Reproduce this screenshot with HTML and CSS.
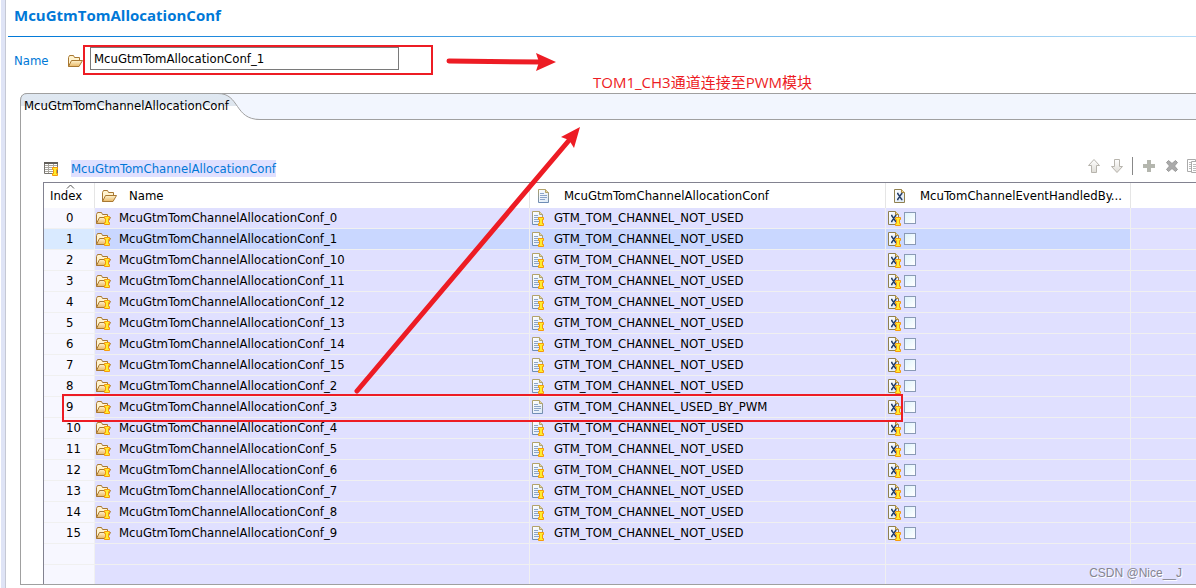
FILE: index.html
```html
<!DOCTYPE html>
<html lang="en">
<head>
<meta charset="utf-8">
<title>McuGtmTomAllocationConf</title>
<link rel="stylesheet" href="styles.css">
</head>
<body>
<svg class="sprite" aria-hidden="true">
  <defs>
    <linearGradient id="gold" x1="0" y1="0" x2="0" y2="1"><stop offset="0" stop-color="#fff3cf"/><stop offset="1" stop-color="#e8b765"/></linearGradient>
    <linearGradient id="paper" x1="0" y1="0" x2="1" y2="1"><stop offset="0" stop-color="#ffffff"/><stop offset="1" stop-color="#dbe8f6"/></linearGradient>
    <linearGradient id="rim" x1="0" y1="0" x2="0" y2="1"><stop offset="0" stop-color="#b3a36a"/><stop offset="1" stop-color="#6f8db5"/></linearGradient>
    <linearGradient id="arrow" x1="0" y1="0" x2="0" y2="1"><stop offset="0" stop-color="#ffffff"/><stop offset="1" stop-color="#dedcd6"/></linearGradient>
    <symbol id="pin" viewBox="0 0 6 9"><path d="M.5.5h5v2h-1v4h1v2h-5v-2h1v-4h-1z" fill="#ffee2e" stroke="#f59a0c"/></symbol>
    <symbol id="folder" viewBox="0 0 16 16"><path d="M1.500 13.500V4.500l1-2h4l1 2h5v3" fill="#fff3cf" stroke="#a87832"/><path d="M1.500 13.500l3-6h11l-3.500 6z" fill="url(#gold)" stroke="#a87832"/></symbol>
    <symbol id="page" viewBox="0 0 16 16"><path d="M2.500 1.500h7l3 3v10h-10z" fill="url(#paper)" stroke="url(#rim)"/><path d="M9.500 1.500v3h3" fill="#e5d6a0" stroke="#b3a36a"/><path d="M4 5.500h4M4 7.500h7M4 9.500h7M4 11.500h5" stroke="#8ba4c9"/></symbol>
    <symbol id="xpage" viewBox="0 0 16 16"><path d="M2.500 1.500h7l3 3v10h-10z" fill="url(#paper)" stroke="#8f8050"/><path d="M9.500 1.500v3h3" fill="#ecd595" stroke="#b08a3a"/><path d="M5 5.500h1.500M9 5.500h1.500M5 11.500h1.500M9 11.500h1.500M5.700 5.500l4 6M9.700 5.500l-4 6" fill="none" stroke="#263f68" stroke-width="1.400"/></symbol>
    <symbol id="folder-pin" viewBox="0 0 16 16"><use href="#folder" width="16" height="16"/><use href="#pin" x="9" y="6" width="6" height="9"/></symbol>
    <symbol id="page-pin" viewBox="0 0 16 16"><use href="#page" width="16" height="16"/><use href="#pin" x="8" y="7" width="6" height="9"/></symbol>
    <symbol id="xpage-pin" viewBox="0 0 16 16"><use href="#xpage" width="16" height="16"/><use href="#pin" x="9" y="7" width="6" height="9"/></symbol>
  </defs>
</svg>
<div class="editor">
  <header class="title-bar"><h1>McuGtmTomAllocationConf</h1></header>
  <div class="name-row">
    <label for="conf-name">Name</label>
    <svg class="icon"><use href="#folder"/></svg>
    <input id="conf-name" class="name-input" type="text" value="McuGtmTomAllocationConf_1" spellcheck="false">
  </div>
  <section class="panel">
    <div class="tab-bar">
      <svg class="tab-shape" viewBox="0 0 240 27" aria-hidden="true">
        <defs><linearGradient id="tabfill" x1="0" y1="0" x2="0" y2="1"><stop offset="0" stop-color="#dfe8f2"/><stop offset=".48" stop-color="#dfe6ee"/><stop offset=".48" stop-color="#fff"/><stop offset="1" stop-color="#fff"/></linearGradient></defs>
        <path d="M.5 27V7Q1 .5 7 .5H198C220 .5 214 26.500 240 26.500V27z" fill="url(#tabfill)"/>
        <path d="M.5 27V7Q1 .5 7 .5H198C220 .5 214 26.500 240 26.500" fill="none" stroke="#a0a0a0"/>
      </svg>
      <button class="tab" type="button">McuGtmTomChannelAllocationConf</button>
    </div>
    <div class="panel-body">
      <div class="list-head">
        <svg class="icon" viewBox="0 0 16 16"><path d="M.5 2.500h13v11H.5z" fill="#fff" stroke="#77746e"/><path d="M0 3h14" stroke="#625f5a" stroke-width="2"/><path d="M1 5.500h12M1 7.500h12M1 9.500h12M1 11.500h12M4.500 4v9M9.500 4v9" stroke="#aaa79f"/><use href="#pin" x="8" y="7" width="6" height="9"/></svg>
        <h2>McuGtmTomChannelAllocationConf</h2>
        <div class="toolbar">
          <button type="button" aria-label="Move up"><svg class="icon" viewBox="0 0 16 16"><path d="M8 1.500l5.500 6H10.500v7h-5v-7H2.500z" fill="url(#arrow)" stroke="#b7b4ad"/></svg></button>
          <button type="button" aria-label="Move down"><svg class="icon" viewBox="0 0 16 16"><path d="M8 14.500l-5.500-6h3v-7h5v7h3z" fill="url(#arrow)" stroke="#b7b4ad"/></svg></button>
          <span class="divider"></span>
          <button type="button" aria-label="Add"><svg class="icon" viewBox="0 0 16 16"><path d="M6 2h4v4h4v4h-4v4H6v-4H2V6h4z" fill="#b4b6ae"/></svg></button>
          <button type="button" aria-label="Delete"><svg class="icon" viewBox="0 0 16 16"><path d="M4.500 2.500L8 5.500l3.500-3L13.500 4.500 10.500 8l3 3.500-2 2L8 10.500l-3.500 3-2-2 3-3.500-3-3.500z" fill="#aaa" stroke="#9a9a9a"/></svg></button>
          <button class="clipped" type="button" aria-label="Duplicate"><svg class="icon" viewBox="0 0 16 16"><path d="M.5 1.500h8v12h-8z" fill="#fff" stroke="#aaa"/><path d="M4.500 3.500h10v11h-10z" fill="#fff" stroke="#aaa"/><path d="M2 4.500h2M2 6.500h2M2 8.500h2M2 10.500h2M6 6.500h7M6 8.500h7M6 10.500h7M6 12.500h7" stroke="#bbb"/></svg></button>
        </div>
      </div>
      <table class="grid">
        <colgroup><col class="c-index"><col class="c-name"><col class="c-conf"><col class="c-event"><col></colgroup>
        <thead><tr>
          <th><svg class="sort" viewBox="0 0 9 5" aria-hidden="true"><path d="M1 4.500l3.500-3.500L8 4.500" fill="none" stroke="#555"/></svg><div class="head">Index</div></th>
          <th><div class="head"><svg class="icon"><use href="#folder"/></svg>Name</div></th>
          <th><div class="head"><svg class="icon"><use href="#page"/></svg>McuGtmTomChannelAllocationConf</div></th>
          <th><div class="head"><svg class="icon"><use href="#xpage"/></svg>McuTomChannelEventHandledBy...</div></th>
          <th></th>
        </tr></thead>
        <tbody>
          <tr><td>0</td><td><div class="cell"><svg class="icon"><use href="#folder-pin"/></svg>McuGtmTomChannelAllocationConf_0</div></td><td><div class="cell"><svg class="icon"><use href="#page-pin"/></svg>GTM_TOM_CHANNEL_NOT_USED</div></td><td><div class="check"><svg class="icon"><use href="#xpage-pin"/></svg><input type="checkbox" aria-label="Event handled, row 0"></div></td><td></td></tr>
          <tr class="selected"><td>1</td><td><div class="cell"><svg class="icon"><use href="#folder-pin"/></svg>McuGtmTomChannelAllocationConf_1</div></td><td><div class="cell"><svg class="icon"><use href="#page-pin"/></svg>GTM_TOM_CHANNEL_NOT_USED</div></td><td><div class="check"><svg class="icon"><use href="#xpage-pin"/></svg><input type="checkbox" aria-label="Event handled, row 1"></div></td><td></td></tr>
          <tr><td>2</td><td><div class="cell"><svg class="icon"><use href="#folder-pin"/></svg>McuGtmTomChannelAllocationConf_10</div></td><td><div class="cell"><svg class="icon"><use href="#page-pin"/></svg>GTM_TOM_CHANNEL_NOT_USED</div></td><td><div class="check"><svg class="icon"><use href="#xpage-pin"/></svg><input type="checkbox" aria-label="Event handled, row 2"></div></td><td></td></tr>
          <tr><td>3</td><td><div class="cell"><svg class="icon"><use href="#folder-pin"/></svg>McuGtmTomChannelAllocationConf_11</div></td><td><div class="cell"><svg class="icon"><use href="#page-pin"/></svg>GTM_TOM_CHANNEL_NOT_USED</div></td><td><div class="check"><svg class="icon"><use href="#xpage-pin"/></svg><input type="checkbox" aria-label="Event handled, row 3"></div></td><td></td></tr>
          <tr><td>4</td><td><div class="cell"><svg class="icon"><use href="#folder-pin"/></svg>McuGtmTomChannelAllocationConf_12</div></td><td><div class="cell"><svg class="icon"><use href="#page-pin"/></svg>GTM_TOM_CHANNEL_NOT_USED</div></td><td><div class="check"><svg class="icon"><use href="#xpage-pin"/></svg><input type="checkbox" aria-label="Event handled, row 4"></div></td><td></td></tr>
          <tr><td>5</td><td><div class="cell"><svg class="icon"><use href="#folder-pin"/></svg>McuGtmTomChannelAllocationConf_13</div></td><td><div class="cell"><svg class="icon"><use href="#page-pin"/></svg>GTM_TOM_CHANNEL_NOT_USED</div></td><td><div class="check"><svg class="icon"><use href="#xpage-pin"/></svg><input type="checkbox" aria-label="Event handled, row 5"></div></td><td></td></tr>
          <tr><td>6</td><td><div class="cell"><svg class="icon"><use href="#folder-pin"/></svg>McuGtmTomChannelAllocationConf_14</div></td><td><div class="cell"><svg class="icon"><use href="#page-pin"/></svg>GTM_TOM_CHANNEL_NOT_USED</div></td><td><div class="check"><svg class="icon"><use href="#xpage-pin"/></svg><input type="checkbox" aria-label="Event handled, row 6"></div></td><td></td></tr>
          <tr><td>7</td><td><div class="cell"><svg class="icon"><use href="#folder-pin"/></svg>McuGtmTomChannelAllocationConf_15</div></td><td><div class="cell"><svg class="icon"><use href="#page-pin"/></svg>GTM_TOM_CHANNEL_NOT_USED</div></td><td><div class="check"><svg class="icon"><use href="#xpage-pin"/></svg><input type="checkbox" aria-label="Event handled, row 7"></div></td><td></td></tr>
          <tr><td>8</td><td><div class="cell"><svg class="icon"><use href="#folder-pin"/></svg>McuGtmTomChannelAllocationConf_2</div></td><td><div class="cell"><svg class="icon"><use href="#page-pin"/></svg>GTM_TOM_CHANNEL_NOT_USED</div></td><td><div class="check"><svg class="icon"><use href="#xpage-pin"/></svg><input type="checkbox" aria-label="Event handled, row 8"></div></td><td></td></tr>
          <tr><td>9</td><td><div class="cell"><svg class="icon"><use href="#folder-pin"/></svg>McuGtmTomChannelAllocationConf_3</div></td><td><div class="cell"><svg class="icon"><use href="#page"/></svg>GTM_TOM_CHANNEL_USED_BY_PWM</div></td><td><div class="check"><svg class="icon"><use href="#xpage-pin"/></svg><input type="checkbox" aria-label="Event handled, row 9"></div></td><td></td></tr>
          <tr><td>10</td><td><div class="cell"><svg class="icon"><use href="#folder-pin"/></svg>McuGtmTomChannelAllocationConf_4</div></td><td><div class="cell"><svg class="icon"><use href="#page-pin"/></svg>GTM_TOM_CHANNEL_NOT_USED</div></td><td><div class="check"><svg class="icon"><use href="#xpage-pin"/></svg><input type="checkbox" aria-label="Event handled, row 10"></div></td><td></td></tr>
          <tr><td>11</td><td><div class="cell"><svg class="icon"><use href="#folder-pin"/></svg>McuGtmTomChannelAllocationConf_5</div></td><td><div class="cell"><svg class="icon"><use href="#page-pin"/></svg>GTM_TOM_CHANNEL_NOT_USED</div></td><td><div class="check"><svg class="icon"><use href="#xpage-pin"/></svg><input type="checkbox" aria-label="Event handled, row 11"></div></td><td></td></tr>
          <tr><td>12</td><td><div class="cell"><svg class="icon"><use href="#folder-pin"/></svg>McuGtmTomChannelAllocationConf_6</div></td><td><div class="cell"><svg class="icon"><use href="#page-pin"/></svg>GTM_TOM_CHANNEL_NOT_USED</div></td><td><div class="check"><svg class="icon"><use href="#xpage-pin"/></svg><input type="checkbox" aria-label="Event handled, row 12"></div></td><td></td></tr>
          <tr><td>13</td><td><div class="cell"><svg class="icon"><use href="#folder-pin"/></svg>McuGtmTomChannelAllocationConf_7</div></td><td><div class="cell"><svg class="icon"><use href="#page-pin"/></svg>GTM_TOM_CHANNEL_NOT_USED</div></td><td><div class="check"><svg class="icon"><use href="#xpage-pin"/></svg><input type="checkbox" aria-label="Event handled, row 13"></div></td><td></td></tr>
          <tr><td>14</td><td><div class="cell"><svg class="icon"><use href="#folder-pin"/></svg>McuGtmTomChannelAllocationConf_8</div></td><td><div class="cell"><svg class="icon"><use href="#page-pin"/></svg>GTM_TOM_CHANNEL_NOT_USED</div></td><td><div class="check"><svg class="icon"><use href="#xpage-pin"/></svg><input type="checkbox" aria-label="Event handled, row 14"></div></td><td></td></tr>
          <tr><td>15</td><td><div class="cell"><svg class="icon"><use href="#folder-pin"/></svg>McuGtmTomChannelAllocationConf_9</div></td><td><div class="cell"><svg class="icon"><use href="#page-pin"/></svg>GTM_TOM_CHANNEL_NOT_USED</div></td><td><div class="check"><svg class="icon"><use href="#xpage-pin"/></svg><input type="checkbox" aria-label="Event handled, row 15"></div></td><td></td></tr>
          <tr><td></td><td></td><td></td><td></td><td></td></tr>
          <tr class="last"><td></td><td></td><td></td><td></td><td></td></tr>
        </tbody>
      </table>
    </div>
  </section>
</div>
<svg class="marks" width="920" height="430" aria-hidden="true">
  <g fill="none" stroke="#ed1c24" stroke-width="2"><path d="M84 46h348v28H84z"/><path d="M63 395h839v26H63z"/></g>
  <g stroke="#ed1c24" stroke-linecap="round" stroke-width="5"><path d="M449 61l92 1"/><path d="M357 391L571 138"/></g>
  <g fill="#ed1c24"><path d="M556 62l-20-9 3 9-3 9z"/><path d="M580 127l-19 10 8 3 5 8z"/></g>
</svg>
<p class="note">TOM1_CH3通道连接至PWM模块</p>
<p class="watermark">CSDN @Nice__J</p>
</body>
</html>
```
FILE: styles.css
```css
* { box-sizing: border-box; }
body {
  position: relative;
  margin: 0;
  padding-left: 1px;
  min-height: 100vh;
  background: #fff;
  color: #000;
  font: 13px/20px "DejaVu Sans Condensed", "Noto Sans CJK SC", sans-serif;
}
h1, h2, p { margin: 0; }
button { border: 0; padding: 0; background: none; font: inherit; color: inherit; }
.sprite { position: absolute; width: 0; height: 0; }
.icon { display: block; flex: none; width: 16px; height: 16px; }
.editor {
  min-height: 100vh;
  border-left: 4px solid #dfe4f6;
  box-shadow: inset 1px 0 #c5c8d4;
  overflow: hidden;
}
.title-bar {
  height: 37px;
  margin-left: 3px;
  padding: 5px 6px;
  border-bottom: 1px solid;
  border-image: linear-gradient(90deg, #0078d7, #b5dcf7) 1;
}
h1 { font: 700 15px/20px "Open Sans", sans-serif; color: #0078d7; }
.name-row { display: flex; align-items: center; height: 46px; margin-top: 1px; padding: 0 9px; }
.name-row label { width: 53px; color: #0078d7; }
.name-input {
  width: 309px;
  height: 23px;
  margin: 0 0 5px 7px;
  padding: 0 3px;
  border: 1px solid #7a7a7a;
  background: #fff;
  font: inherit;
  color: inherit;
}
.panel { margin: 9px 0 3px 15px; border-bottom: 1px solid #a0a0a0; }
.tab-bar {
  position: relative;
  height: 27px;
  border: solid #a0a0a0;
  border-width: 1px 0;
  border-radius: 8px 0 0 0;
  background: #f2f6fe;
}
.tab-shape { position: absolute; left: 0; top: -1px; width: 240px; height: 27px; }
.tab { position: relative; display: block; padding: 2px 4px; }
.panel-body { padding: 35px 0 0 22px; border-left: 1px solid #a0a0a0; }
.list-head { display: flex; align-items: center; height: 27px; padding-bottom: 2px; }
.list-head .icon { margin-left: 1px; }
.list-head h2 { margin: 1px 0 0 11px; background: #e0e0ff; color: #0078d7; font-size: 13px; line-height: 17px; font-weight: 400; }
.toolbar { display: flex; align-items: center; gap: 7px; height: 18px; margin: 0 0 3px auto; }
.toolbar .icon { margin: 0; }
.toolbar .divider { width: 1px; height: 18px; background: #888; margin-right: 1px; }
.toolbar .clipped { width: 9px; overflow: hidden; }
.grid {
  width: 100%;
  table-layout: fixed;
  border-collapse: separate;
  border-spacing: 0;
  border: solid #828290;
  border-width: 1px 0 0 1px;
}
.c-index { width: 51px; }
.c-name { width: 435px; }
.c-conf { width: 356px; }
.c-event { width: 245px; }
th, td { padding: 0; text-align: left; font-weight: 400; white-space: nowrap; overflow: hidden; }
th { position: relative; height: 25px; border-right: 1px solid #e5e5e5; }
th:last-child, td:last-child { border-right: 0; }
.sort { position: absolute; left: 22px; top: 1px; width: 9px; height: 5px; }
.head { display: flex; align-items: center; gap: 12px; padding-left: 6px; }
td {
  height: 21px;
  line-height: 20px;
  background: #e0e0ff;
  border: solid #f0f0f0;
  border-width: 0 1px 1px 0;
}
td:first-child { padding-left: 22px; background: #f7f7ff; }
.cell { display: flex; align-items: center; gap: 8px; height: 20px; }
.check { display: flex; align-items: center; gap: 2px; height: 20px; }
.check input {
  appearance: none;
  width: 12px;
  height: 12px;
  margin: 0;
  border: 1px solid #8a9ab5;
  background: linear-gradient(135deg, #dff3fb, #fff);
}
.selected td { background: #c9d7ff; }
.selected td:first-child { background: #d9eaff; }
.selected td:last-child { background: #e0e0ff; }
.last td { height: 19px; border-bottom: 0; }
.marks { position: absolute; left: 0; top: 0; }
.note {
  position: absolute;
  left: 593px;
  top: 72px;
  font: 15px/20px "Open Sans", "Noto Sans CJK SC", sans-serif;
  color: #ed1c24;
  white-space: nowrap;
}
.watermark {
  position: absolute;
  right: 14px;
  bottom: 5px;
  font: 12px/20px "Liberation Sans", sans-serif;
  color: #85858f;
  text-shadow: 1px 1px #fff;
}
```
